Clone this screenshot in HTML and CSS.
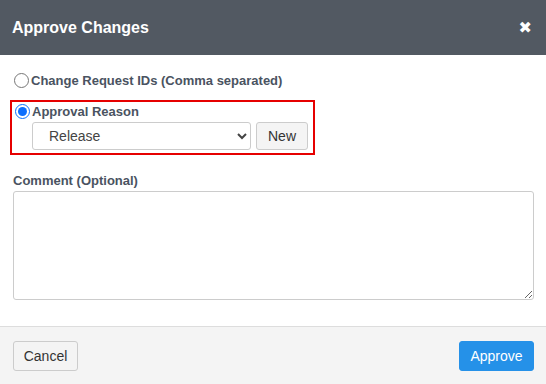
FILE: index.html
```html
<!DOCTYPE html>
<html lang="en">
<head>
    <meta charset="UTF-8">
    <title>Approve Changes</title>
    <link rel="stylesheet" href="styles.css">
</head>
<body>
    <div class="modal">
        <div class="modal-header">
            <h3>Approve Changes</h3>
            <span class="close">&#10006;</span>
        </div>
        <div class="modal-body">
            <label class="radio-row">
                <input type="radio" name="mode">
                <span>Change Request IDs (Comma separated)</span>
            </label>
            <div class="reason-box">
                <label class="radio-row">
                    <input type="radio" name="mode" checked>
                    <span>Approval Reason</span>
                </label>
                <div class="reason-controls">
                    <select class="reason-select">
                        <option>Release</option>
                    </select>
                    <button class="btn btn-light">New</button>
                </div>
            </div>
            <label class="field-label">Comment (Optional)</label>
            <textarea class="comment"></textarea>
        </div>
        <div class="modal-footer">
            <button class="btn btn-cancel">Cancel</button>
            <button class="btn btn-primary">Approve</button>
        </div>
    </div>
</body>
</html>
```
FILE: styles.css
```css
* {
    margin: 0;
    padding: 0;
    box-sizing: border-box;
}
body {
    font-family: 'Liberation Sans', Arial, sans-serif;
    background: #fff;
    width: 546px;
    height: 384px;
    overflow: hidden;
}
.modal {
    display: flex;
    flex-direction: column;
    height: 384px;
}
.modal-header {
    height: 55px;
    background-color: #525962;
    color: #fff;
    display: flex;
    align-items: center;
    justify-content: space-between;
    padding: 0 14px 0 12px;
}
.modal-header h3 {
    font-size: 16px;
    font-weight: bold;
}
.close {
    font-size: 16px;
    font-weight: bold;
    font-family: 'DejaVu Sans', sans-serif;
}
.modal-body {
    flex: 1;
    padding: 18px 12px 0 13px;
    border-bottom: 1px solid #dddddd;
}
.radio-row {
    display: flex;
    align-items: center;
    font-size: 13px;
    font-weight: bold;
    color: #4a5361;
}
.radio-row input {
    width: 15px;
    height: 15px;
    margin: 0 2px 0 1px;
    accent-color: #0d6efd;
}
.reason-box {
    border: 2px solid #e60000;
    margin: 12px 219px 0 -3px;
    padding: 2px 5px 3px 2px;
}
.reason-controls {
    display: flex;
    gap: 5px;
    margin-top: 3px;
    padding-left: 18px;
}
.reason-select {
    width: 219px;
    height: 28px;
    border: 1px solid #cccccc;
    border-radius: 3px;
    background: #fff;
    font-family: inherit;
    font-size: 14px;
    color: #444;
    padding-left: 12px;
}
.btn {
    font-family: inherit;
    font-size: 14px;
    border-radius: 3px;
    cursor: pointer;
}
.btn-light {
    width: 52px;
    height: 28px;
    background: #f4f4f4;
    border: 1px solid #cccccc;
    color: #333;
}
.field-label {
    display: block;
    margin-top: 18px;
    font-size: 13px;
    font-weight: bold;
    color: #4a5361;
}
.comment {
    display: block;
    width: 521px;
    height: 109px;
    margin-top: 3px;
    border: 1px solid #cccccc;
    border-radius: 3px;
}
.modal-footer {
    height: 57px;
    background: #f4f4f4;
    display: flex;
    align-items: center;
    justify-content: space-between;
    padding: 0 12px 0 13px;
}
.btn-cancel {
    width: 65px;
    height: 30px;
    background: #f4f4f4;
    border: 1px solid #cccccc;
    color: #333;
}
.btn-primary {
    width: 75px;
    height: 30px;
    background: #2591e8;
    border: 1px solid #2591e8;
    color: #fff;
}
```
